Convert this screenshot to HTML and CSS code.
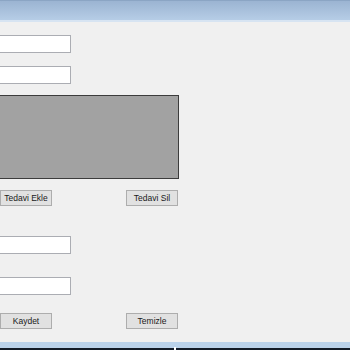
FILE: index.html
```html
<!DOCTYPE html>
<html lang="tr">

<head>
    <meta charset="UTF-8">
    <title>Tedavi</title>
    <link rel="stylesheet" href="styles.css">
</head>

<body>
    <div class="titlebar"></div>
    <div class="form">
        <input type="text" class="field first">
        <input type="text" class="field second">
        <div class="list"></div>

        <div class="row row-top">
            <button class="btn">Tedavi Ekle</button>
            <button class="btn">Tedavi Sil</button>
        </div>

        <input type="text" class="field third">
        <input type="text" class="field fourth">

        <div class="row row-bottom">
            <button class="btn">Kaydet</button>
            <button class="btn">Temizle</button>
        </div>
    </div>
    <div class="taskbar">
        <span class="mark"></span>
    </div>
</body>

</html>
```

FILE: styles.css
```css
html,
body {
    margin: 0;
    padding: 0;
    width: 350px;
    height: 350px;
    overflow: hidden;
}

body {
    background-color: #f0f0f0;
    font-family: "Liberation Sans", Arial, sans-serif;
    font-size: 11px;
    color: #1a1a1a;
    display: flex;
    flex-direction: column;
}

.titlebar {
    height: 19px;
    border-top: 1px solid #8ba5c4;
    border-bottom: 2px solid #d7e4f2;
    background: linear-gradient(#9bb4d2, #b6cde6);
}

.form {
    flex: 1;
    display: flex;
    flex-direction: column;
    align-items: flex-start;
    margin-left: -10px;
}

.field {
    box-sizing: border-box;
    width: 81px;
    height: 18px;
    margin: 0;
    padding: 0 3px;
    border: 1px solid #abadb3;
    background: #ffffff;
    outline: none;
}

.first {
    margin-top: 13px;
}

.second {
    margin-top: 13px;
}

.list {
    box-sizing: border-box;
    width: 189px;
    height: 84px;
    margin-top: 11px;
    border: 1px solid #3c3c3c;
    background-color: #a2a2a2;
}

.row {
    display: flex;
    width: 178px;
    margin-left: 10px;
    justify-content: space-between;
}

.row-top {
    margin-top: 11px;
}

.row-bottom {
    margin-top: 18px;
}

.third {
    margin-top: 30px;
}

.fourth {
    margin-top: 23px;
}

.btn {
    box-sizing: border-box;
    width: 52px;
    height: 16px;
    padding: 0;
    border: 1px solid #adadad;
    background-color: #e1e1e1;
    font-family: "Liberation Sans", Arial, sans-serif;
    font-size: 8.5px;
    line-height: 14px;
    color: #1a1a1a;
    white-space: nowrap;
}

.taskbar {
    position: relative;
    height: 2px;
    border-top: 6px solid #bad2ea;
    background-color: #121b27;
}

.mark {
    position: absolute;
    left: 174px;
    top: -1px;
    width: 2px;
    height: 3px;
    background: #ffffff;
}
```
